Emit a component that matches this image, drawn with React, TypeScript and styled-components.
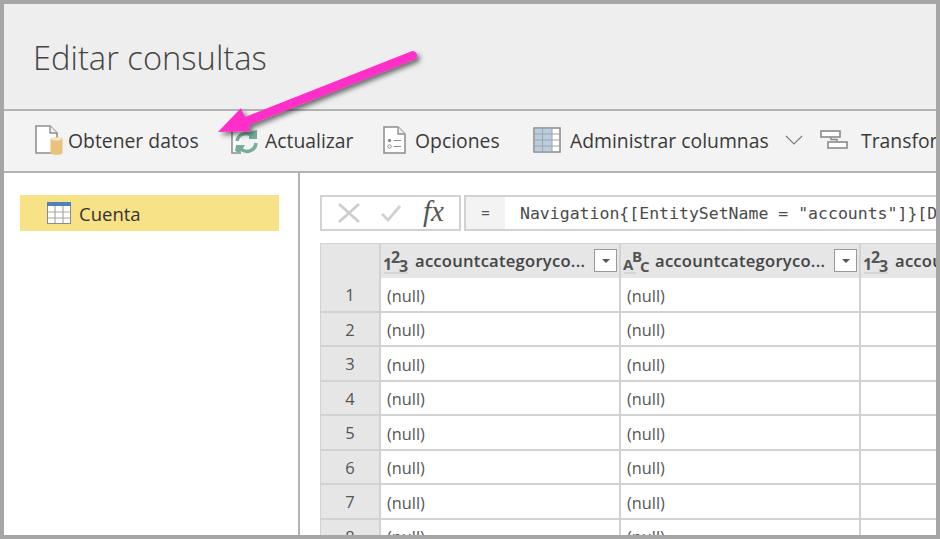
import React from "react";
import styled, { createGlobalStyle } from "styled-components";

const Global = createGlobalStyle`
  html, body { margin: 0; padding: 0; background: #fff; }
  * { box-sizing: border-box; }
  #root { width: 940px; height: 539px; }
`;

const UI = `"Open Sans", "Noto Sans", "Liberation Sans", sans-serif`;

const Frame = styled.div`
  position: relative;
  width: 940px;
  height: 539px;
  border: 4px solid #a6a6a6;
  display: flex;
  flex-direction: column;
  overflow: hidden;
  font-family: ${UI};
  color: #3c3c3c;
  background: #fff;
`;
const TitleBar = styled.header`
  height: 107px;
  flex: none;
  background: #eeeeee;
  border-bottom: 2px solid #b3b3b3;
  padding: 31px 0 0 29px;
`;
const Title = styled.h1`
  margin: 0;
  font-size: 32.7px;
  line-height: 46px;
  font-weight: 300;
  color: #444;
`;
const Toolbar = styled.nav`
  height: 62px;
  flex: none;
  background: #f3f3f3;
  border-bottom: 2px solid #b3b3b3;
  display: flex;
  align-items: center;
  padding: 0 0 2px 31px;
  white-space: nowrap;
  overflow: hidden;
`;
const ToolItem = styled.div<{ $w: number; $gap: number }>`
  flex: none;
  width: ${(p) => p.$w}px;
  display: flex;
  align-items: center;
  gap: ${(p) => p.$gap}px;
  font-size: 19.35px;
  color: #3a3a3a;
`;
const Body = styled.div`
  flex: 1;
  min-height: 0;
  display: flex;
`;
const Side = styled.aside`
  width: 296px;
  flex: none;
  border-right: 2px solid #b3b3b3;
  padding: 22px 0 0 16px;
`;
const QueryItem = styled.div`
  width: 259px;
  height: 36px;
  background: #f8e287;
  display: flex;
  align-items: center;
  padding-left: 27px;
  gap: 8px;
  font-size: 18.5px;
  color: #333;
`;
const Main = styled.main`
  flex: 1;
  min-width: 0;
  overflow: hidden;
  padding: 22px 0 0 20px;
`;
const FormulaRow = styled.div`
  display: flex;
  gap: 3px;
  height: 36px;
  margin-bottom: 12px;
`;
const FxBox = styled.div`
  width: 141px;
  flex: none;
  border: 2px solid #d2d2d2;
  display: flex;
  align-items: center;
  padding-left: 15px;
  gap: 18px;
`;
const FormulaBox = styled.div`
  flex: 1;
  min-width: 0;
  border: 2px solid #d2d2d2;
  border-right: none;
  display: flex;
  overflow: hidden;
`;
const EqualCell = styled.div`
  width: 39px;
  flex: none;
  background: #f3f3f3;
  display: flex;
  align-items: center;
  justify-content: center;
  font-family: "DejaVu Sans Mono", monospace;
  font-size: 14px;
  color: #555;
`;
const FormulaText = styled.div`
  padding: 1px 0 0 15px;
  font-family: "DejaVu Sans Mono", "Liberation Mono", monospace;
  font-size: 16.5px;
  line-height: 32px;
  color: #4a4a4a;
  white-space: nowrap;
`;
const Grid = styled.div`
  display: grid;
  grid-template-columns: 61px 240px 240px 240px;
  width: 781px;
`;
const HeadCorner = styled.div`
  height: 35px;
  background: #e6e6e6;
  border: 1px solid #d2d2d2;
  border-width: 1px 2px 0 1px;
`;
const HeadCell = styled.div`
  height: 35px;
  background: #e6e6e6;
  border-top: 1px solid #d2d2d2;
  border-right: 2px solid #d2d2d2;
  display: flex;
  align-items: center;
  padding: 0 0 1px 2px;
  gap: 4px;
  font-size: 16.6px;
  letter-spacing: 0.25px;
  font-weight: 600;
  color: #444;
  white-space: nowrap;
  overflow: hidden;
`;
const HeadLabel = styled.span`
  flex: 1;
  min-width: 0;
  overflow: hidden;
`;
const FilterBtn = styled.span`
  flex: none;
  width: 23px;
  height: 23px;
  margin-right: 2px;
  background: #fff;
  border: 1px solid #9a9a9a;
  display: flex;
  align-items: center;
  justify-content: center;
  &::before {
    content: "";
    border-left: 4px solid transparent;
    border-right: 4px solid transparent;
    border-top: 4px solid #555;
  }
`;
const RowNum = styled.div`
  height: 34.5px;
  background: #e6e6e6;
  border: 1px solid #d2d2d2;
  border-width: 0 2px 2px 1px;
  display: flex;
  align-items: center;
  justify-content: center;
  padding-top: 1px;
  font-size: 16.5px;
  color: #555;
`;
const Cell = styled.div`
  height: 34.5px;
  border-right: 2px solid #d2d2d2;
  border-bottom: 2px solid #d2d2d2;
  display: flex;
  align-items: center;
  padding: 3px 0 0 6px;
  font-size: 16.3px;
  color: #555;
`;
const ArrowLayer = styled.svg`
  position: absolute;
  left: -4px;
  top: -4px;
  pointer-events: none;
`;
const TypeGlyph = styled.svg`
  flex: none;
  display: block;
`;
const FxLabel = styled.span`
  font-family: "Liberation Serif", serif;
  font-style: italic;
  font-weight: 400;
  font-size: 29px;
  line-height: 1;
  color: #555;
  margin: -4px 0 0 3px;
`;

const DocData = () => (
  <svg width="28" height="30" viewBox="0 0 28 30">
    <path d="M1 1h14l7 7v20H1z" fill="#fff" stroke="#8f8f8f" strokeWidth="1.6" />
    <path d="M15 1v7h7" fill="#f3f3f3" stroke="#8f8f8f" strokeWidth="1.4" />
    <path d="M15.5 14c0-2 12-2 12 0v14c0 2.500-12 2.500-12 0z" fill="#e9c27d" />
    <ellipse cx="21.500" cy="14" rx="5" ry="1.500" fill="#f7e7c4" />
  </svg>
);
const Refresh = () => (
  <svg width="28" height="30" viewBox="0 0 28 30">
    <path d="M10 28H1V1h8" fill="#fff" stroke="#8f8f8f" strokeWidth="1.6" />
    <g fill="none" stroke="#74ad9b" strokeWidth="3.4">
      <path d="M6 16a9 9 0 0 1 15-5" />
      <path d="M25 18a9 9 0 0 1-15 6" />
    </g>
    <path d="M18 7l8-2v9h-8zM5 20h9l-5 8-5-2z" fill="#74ad9b" />
  </svg>
);
const Options = () => (
  <svg width="23" height="28" viewBox="0 0 23 28">
    <path d="M1 1h14l7 7v19H1z" fill="#fff" stroke="#8c8c8c" strokeWidth="1.5" />
    <path d="M15 1v7h7" fill="#eee" stroke="#8c8c8c" strokeWidth="1.3" />
    <circle cx="6.500" cy="14.500" r="1.700" fill="#8c8c8c" />
    <circle cx="6.500" cy="20.500" r="1.700" fill="none" stroke="#8c8c8c" />
    <path d="M10.500 14.500H18M10.500 20.500H18" stroke="#8c8c8c" strokeWidth="1.200" />
  </svg>
);
const Columns = () => (
  <svg width="28" height="26" viewBox="0 0 28 26">
    <rect x="1" y="1" width="26" height="24" fill="#fff" stroke="#8f8f8f" strokeWidth="1.6" />
    <rect x="2" y="2" width="17" height="22" fill="#b7cde4" />
    <path d="M9.500 1v24M19 1v24M1 7h26M1 13h26M1 19h26" stroke="#a2a2a2" strokeWidth="1" />
  </svg>
);
const Chevron = () => (
  <svg width="18" height="10" viewBox="0 0 18 10">
    <path d="M1 1l8 8 8-8" fill="none" stroke="#7a7a7a" strokeWidth="1.100" />
  </svg>
);
const Transform = () => (
  <svg width="28" height="20" viewBox="0 0 28 20">
    <g fill="#fff" stroke="#8a8a8a" strokeWidth="1.600">
      <rect x="1" y="1" width="19" height="6" />
      <rect x="8" y="12" width="19" height="6" />
    </g>
    <path d="M11 7v2.500h6V12" fill="none" stroke="#8a8a8a" strokeWidth="1.400" />
  </svg>
);
const TableIcon = () => (
  <svg width="24" height="22" viewBox="0 0 24 22">
    <rect x="0.500" y="0.500" width="23" height="21" fill="#fff" stroke="#8a8a8a" />
    <rect x="0" y="0" width="24" height="4" fill="#4f81bd" />
    <path d="M8 4v17M16 4v17M1 10h22M1 16h22" stroke="#a8a8a8" strokeWidth="1.200" />
  </svg>
);
const FxIcons = () => (
  <>
    <svg width="25" height="22" viewBox="0 0 25 22">
      <path d="M2 2l20 18M22 2L2 20" stroke="#cdcdcd" strokeWidth="2.800" fill="none" />
    </svg>
    <svg width="22" height="18" viewBox="0 0 22 18">
      <path d="M2 10l6 6L20 2" stroke="#d2d2d2" strokeWidth="2.800" fill="none" />
    </svg>
  </>
);
const Num123 = () => (
  <TypeGlyph width="28" height="26" viewBox="0 0 28 26">
    <g fill="#555" fontFamily="Open Sans, sans-serif" fontWeight="700">
      <text x="0" y="22" fontSize="16">1</text>
      <text x="8" y="15" fontSize="16">2</text>
      <text x="16" y="24" fontSize="16">3</text>
    </g>
    <path d="M1 25h24" stroke="#c4c4c4" strokeWidth="1" />
  </TypeGlyph>
);
const Abc = () => (
  <TypeGlyph width="28" height="26" viewBox="0 0 28 26">
    <g fill="#555" fontFamily="Open Sans, sans-serif" fontWeight="700">
      <text x="0" y="22" fontSize="15">A</text>
      <text x="9" y="14" fontSize="15">B</text>
      <text x="17" y="24" fontSize="15">C</text>
    </g>
    <path d="M1 25h12" stroke="#c4c4c4" strokeWidth="1" />
  </TypeGlyph>
);

const Arrow = () => (
  <ArrowLayer width="940" height="539" viewBox="0 0 940 539">
    <defs>
      <filter id="arrowShadow" x="-20%" y="-30%" width="150%" height="170%">
        <feDropShadow dx="3" dy="3" stdDeviation="2.500" floodColor="#000" floodOpacity="0.55" />
      </filter>
    </defs>
    <g filter="url(#arrowShadow)">
      <path
        d="M218 132L241 108L245 117L411 51.500A4.300 4.300 0 0 1 414.500 59.500L249 125L250 131z"
        fill="#ff2ec8"
      />
    </g>
  </ArrowLayer>
);

const rows = [1, 2, 3, 4, 5, 6, 7, 8];

export default function App() {
  return (
    <>
      <Global />
      <Frame>
        <TitleBar>
          <Title>Editar consultas</Title>
        </TitleBar>
        <Toolbar>
          <ToolItem $w={196} $gap={5}><DocData />Obtener datos</ToolItem>
          <ToolItem $w={152} $gap={6}><Refresh />Actualizar</ToolItem>
          <ToolItem $w={150} $gap={9}><Options />Opciones</ToolItem>
          <ToolItem $w={252} $gap={9}><Columns />Administrar columnas</ToolItem>
          <ToolItem $w={35} $gap={0}><Chevron /></ToolItem>
          <ToolItem $w={200} $gap={13}><Transform />Transformar</ToolItem>
        </Toolbar>
        <Body>
          <Side>
            <QueryItem><TableIcon />Cuenta</QueryItem>
          </Side>
          <Main>
            <FormulaRow>
              <FxBox><FxIcons /><FxLabel>fx</FxLabel></FxBox>
              <FormulaBox>
                <EqualCell>=</EqualCell>
                <FormulaText>{'Navigation{[EntitySetName = "accounts"]}[Data]'}</FormulaText>
              </FormulaBox>
            </FormulaRow>
            <Grid>
              <HeadCorner />
              <HeadCell><Num123 /><HeadLabel>accountcategoryco...</HeadLabel><FilterBtn /></HeadCell>
              <HeadCell><Abc /><HeadLabel>accountcategoryco...</HeadLabel><FilterBtn /></HeadCell>
              <HeadCell><Num123 /><HeadLabel>accountcategoryco...</HeadLabel><FilterBtn /></HeadCell>
              {rows.map((n) => (
                <React.Fragment key={n}>
                  <RowNum>{n}</RowNum>
                  <Cell>(null)</Cell>
                  <Cell>(null)</Cell>
                  <Cell />
                </React.Fragment>
              ))}
            </Grid>
          </Main>
        </Body>
        <Arrow />
      </Frame>
    </>
  );
}
